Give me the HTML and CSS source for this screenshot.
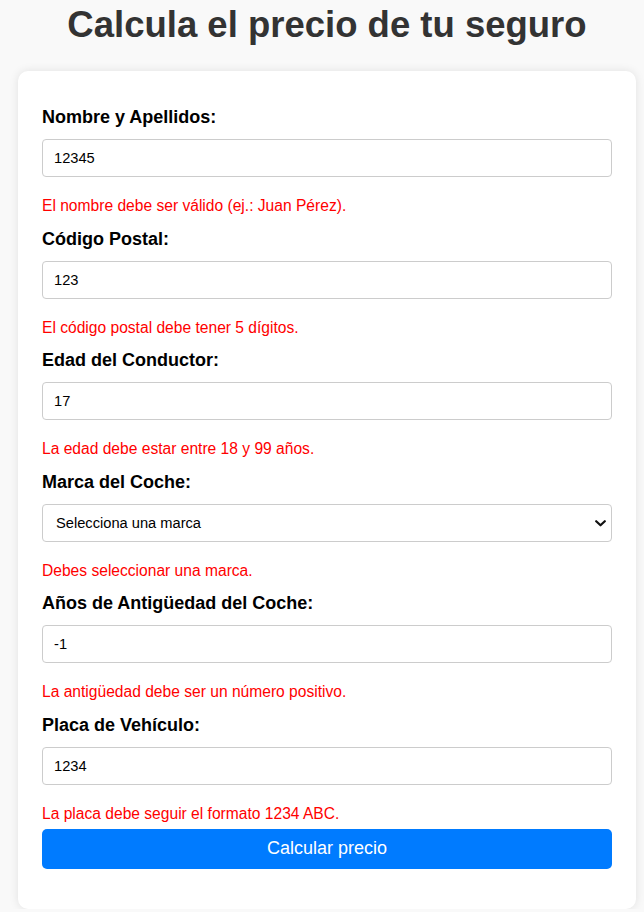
FILE: index.html
```html
<!DOCTYPE html>
<html lang="es">
<head>
<meta charset="utf-8">
<title>Calcula el precio de tu seguro</title>
<link rel="stylesheet" href="styles.css">
</head>
<body>
<div class="page">
  <h1 class="title">Calcula el precio de tu seguro</h1>
  <form class="card">
    <label class="label" for="nombre">Nombre y Apellidos:</label>
    <input class="field" id="nombre" type="text" value="12345">
    <p class="error">El nombre debe ser válido (ej.: Juan Pérez).</p>

    <label class="label" for="cp">Código Postal:</label>
    <input class="field" id="cp" type="text" value="123">
    <p class="error">El código postal debe tener 5 dígitos.</p>

    <label class="label" for="edad">Edad del Conductor:</label>
    <input class="field" id="edad" type="text" value="17">
    <p class="error">La edad debe estar entre 18 y 99 años.</p>

    <label class="label" for="marca">Marca del Coche:</label>
    <div class="select-wrap">
      <select class="field select" id="marca">
        <option>Selecciona una marca</option>
      </select>
      <svg class="chevron" width="11" height="7" viewBox="0 0 11 7" aria-hidden="true"><path d="M1.2 1.2 L5.5 5.3 L9.8 1.2" fill="none" stroke="#111" stroke-width="2.2" stroke-linecap="round" stroke-linejoin="round"/></svg>
    </div>
    <p class="error">Debes seleccionar una marca.</p>

    <label class="label" for="anios">Años de Antigüedad del Coche:</label>
    <input class="field" id="anios" type="text" value="-1">
    <p class="error">La antigüedad debe ser un número positivo.</p>

    <label class="label" for="placa">Placa de Vehículo:</label>
    <input class="field" id="placa" type="text" value="1234">
    <p class="error">La placa debe seguir el formato 1234 ABC.</p>

    <button class="submit" type="button">Calcular precio</button>
  </form>
</div>
</body>
</html>
```

FILE: styles.css
```css
html, body {
  margin: 0;
  padding: 0;
  background: #f9f9f9;
  font-family: "Liberation Sans", Arial, sans-serif;
}

.page {
  padding: 0 8px 0 18px;
}

.title {
  margin: 4px 0 26px;
  font-size: 36.5px;
  line-height: 41px;
  font-weight: bold;
  color: #333;
  text-align: center;
}

.card {
  display: flex;
  flex-direction: column;
  background: #fff;
  border-radius: 10px;
  box-shadow: 0 0 10px rgba(0, 0, 0, 0.1);
  padding: 28px 24px 40px;
}

.label {
  display: block;
  margin: 8px 0 12px;
  font-size: 18px;
  line-height: 20px;
  font-weight: bold;
  color: #000;
}

.field {
  box-sizing: border-box;
  width: 100%;
  height: 38px;
  margin: 0;
  padding: 0 11px;
  border: 1px solid #ccc;
  border-radius: 4px;
  background: #fff;
  font-family: "Liberation Sans", Arial, sans-serif;
  font-size: 14.67px;
  color: #000;
}

.select-wrap {
  position: relative;
}

.select {
  appearance: none;
  -webkit-appearance: none;
  padding-left: 13px;
}

.chevron {
  position: absolute;
  right: 6px;
  top: 16px;
}

.error {
  margin: 20px 0 6px;
  font-size: 15.6px;
  line-height: 17.6px;
  color: #ff0000;
}

.submit {
  height: 40px;
  margin-top: 0;
  border: none;
  border-radius: 5px;
  background: #007bff;
  color: #fff;
  font-family: "Liberation Sans", Arial, sans-serif;
  font-size: 18px;
}
```
